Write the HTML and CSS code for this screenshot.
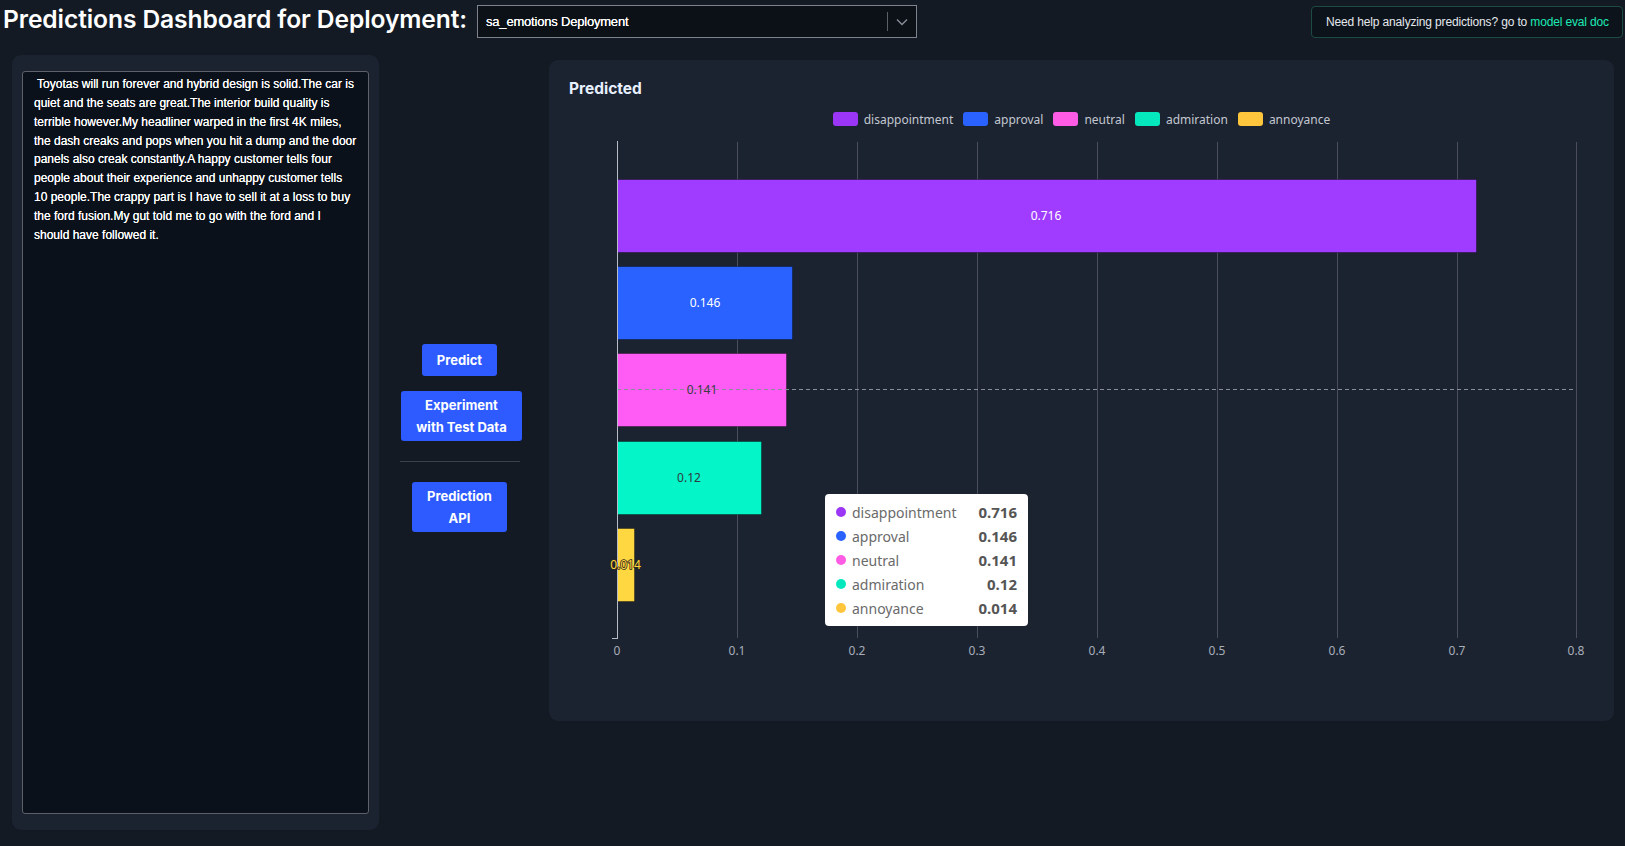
FILE: index.html
```html
<!DOCTYPE html>
<html>
<head>
<meta charset="utf-8">
<link rel="stylesheet" href="styles.css">
</head>
<body>
<header class="topbar">
  <h1 class="title">Predictions Dashboard for Deployment:</h1>
  <div class="select">
    <span class="select-value">sa_emotions Deployment</span>
    <span class="select-sep"></span>
    <svg class="select-chev" width="12" height="8" viewBox="0 0 12 8"><path d="M1 1.5 L6 6.5 L11 1.5" fill="none" stroke="#8a8f99" stroke-width="1.3"/></svg>
  </div>
  <div class="spacer"></div>
  <div class="help">Need help analyzing predictions? go to <span class="help-link">model eval doc</span></div>
</header>
<main class="main">
  <section class="input-panel">
    <div class="input-text"> Toyotas will run forever and hybrid design is solid.The car is<br>quiet and the seats are great.The interior build quality is<br>terrible however.My headliner warped in the first 4K miles,<br>the dash creaks and pops when you hit a dump and the door<br>panels also creak constantly.A happy customer tells four<br>people about their experience and unhappy customer tells<br>10 people.The crappy part is I have to sell it at a loss to buy<br>the ford fusion.My gut told me to go with the ford and I<br>should have followed it.</div>
  </section>
  <section class="actions">
    <button class="btn btn-predict">Predict</button>
    <button class="btn btn-exp">Experiment<br>with Test Data</button>
    <div class="sep"></div>
    <button class="btn btn-api">Prediction<br>API</button>
  </section>
  <section class="chart-panel">
    <div class="chart-title">Predicted</div>
    <div class="legend">
      <div class="legend-item"><span class="sw sw-dis"></span>disappointment</div>
      <div class="legend-item"><span class="sw sw-app"></span>approval</div>
      <div class="legend-item"><span class="sw sw-neu"></span>neutral</div>
      <div class="legend-item"><span class="sw sw-adm"></span>admiration</div>
      <div class="legend-item"><span class="sw sw-ann"></span>annoyance</div>
    </div>
    <svg class="plot" width="1065" height="594" viewBox="0 0 1065 594">
      <g stroke="#4a4d5c" stroke-width="1">
        <line x1="188.5" y1="15" x2="188.5" y2="511"/>
        <line x1="308.5" y1="15" x2="308.5" y2="511"/>
        <line x1="428.5" y1="15" x2="428.5" y2="511"/>
        <line x1="548.5" y1="15" x2="548.5" y2="511"/>
        <line x1="668.5" y1="15" x2="668.5" y2="511"/>
        <line x1="788.5" y1="15" x2="788.5" y2="511"/>
        <line x1="908.5" y1="15" x2="908.5" y2="511"/>
        <line x1="1027.5" y1="15" x2="1027.5" y2="511"/>
      </g>
      <g stroke="rgba(0,0,0,0.35)" stroke-width="1">
        <rect x="68.5" y="52.5" width="859" height="73" fill="#a03cff"/>
        <rect x="68.5" y="139.5" width="175" height="73" fill="#2962ff"/>
        <rect x="68.5" y="226.5" width="169" height="73" fill="#ff5cf5"/>
        <rect x="68.5" y="314.5" width="144" height="73" fill="#04f5c8"/>
        <rect x="68.5" y="401.5" width="17" height="73" fill="#ffd740"/>
      </g>
      <line x1="68" y1="262.5" x2="1027" y2="262.5" stroke="#8a8d96" stroke-width="1" stroke-dasharray="4 3"/>
      <line x1="68.5" y1="14" x2="68.5" y2="511.5" stroke="#b8bcc6" stroke-width="1"/>
      <line x1="63" y1="511.5" x2="69" y2="511.5" stroke="#b8bcc6" stroke-width="1"/>
      <g class="bar-label" text-anchor="middle">
        <text x="497" y="93" fill="#ffffff">0.716</text>
        <text x="156" y="180" fill="#ffffff">0.146</text>
        <text x="153" y="267" fill="#3a3a44">0.141</text>
        <text x="140" y="355" fill="#2f3a3c">0.12</text>
        <text x="76.5" y="442" fill="#ffd740" stroke="#2e2a1c" stroke-width="1.6" paint-order="stroke">0.014</text>
      </g>
      <g class="tick" text-anchor="middle" fill="#a8adb8">
        <text x="68" y="528">0</text>
        <text x="188" y="528">0.1</text>
        <text x="308" y="528">0.2</text>
        <text x="428" y="528">0.3</text>
        <text x="548" y="528">0.4</text>
        <text x="668" y="528">0.5</text>
        <text x="788" y="528">0.6</text>
        <text x="908" y="528">0.7</text>
        <text x="1027" y="528">0.8</text>
      </g>
    </svg>
    <div class="tooltip">
      <div class="tt-row"><span class="dot dot-dis"></span><span class="tt-name">disappointment</span><span class="tt-val">0.716</span></div>
      <div class="tt-row"><span class="dot dot-app"></span><span class="tt-name">approval</span><span class="tt-val">0.146</span></div>
      <div class="tt-row"><span class="dot dot-neu"></span><span class="tt-name">neutral</span><span class="tt-val">0.141</span></div>
      <div class="tt-row"><span class="dot dot-adm"></span><span class="tt-name">admiration</span><span class="tt-val">0.12</span></div>
      <div class="tt-row"><span class="dot dot-ann"></span><span class="tt-name">annoyance</span><span class="tt-val">0.014</span></div>
    </div>
  </section>
</main>
</body>
</html>
```
FILE: styles.css
```css
* { box-sizing: border-box; }
html, body { margin: 0; padding: 0; }
body {
  background: #141a23;
  width: 1625px;
  height: 846px;
  overflow: hidden;
  font-family: "Liberation Sans", Arial, sans-serif;
  color: #fff;
}
.topbar {
  display: flex;
  align-items: center;
  height: 43px;
  padding: 0 2px 0 3px;
}
.title {
  margin: 0 10px 0 0;
  font-family: Inter, sans-serif;
  font-weight: 600;
  font-size: 24.6px;
  letter-spacing: -0.1px;
  color: #ffffff;
  position: relative;
  top: -3px;
  white-space: nowrap;
}
.select {
  width: 440px;
  height: 33px;
  border: 1px solid #7d828c;
  background: #0c1118;
  display: flex;
  align-items: center;
  padding-left: 8px;
}
.select-value {
  flex: 1;
  font-size: 13px;
  color: #ffffff;
  letter-spacing: -0.2px;
  text-shadow: 0 0 0.4px #fff;
}
.select-sep {
  width: 1px;
  height: 19px;
  background: #5a5f68;
}
.select-chev { margin: 0 8px 0 8px; }
.spacer { flex: 1; }
.help {
  width: 312px;
  height: 32px;
  border: 1px solid #1d4b43;
  border-radius: 4px;
  background: #0d131a;
  display: flex;
  align-items: center;
  padding-left: 14px;
  font-size: 12px;
  color: #e4e8ee;
  white-space: pre;
  letter-spacing: -0.15px;
}
.help-link { color: #1de9b6; }
.main {
  display: flex;
  align-items: flex-start;
  margin-top: 12px;
}
.input-panel {
  margin-left: 12px;
  width: 367px;
  height: 775px;
  background: #1b2330;
  border-radius: 9px;
  padding: 16px 10px;
}
.input-text {
  width: 347px;
  height: 743px;
  border: 1px solid #5e6168;
  border-radius: 3px;
  background: #0b111a;
  padding: 3px 8px 0 11px;
  font-size: 12px;
  line-height: 18.85px;
  color: #ffffff;
  white-space: pre;
  font-weight: normal;
  text-shadow: 0 0 0.4px #fff;
}
.actions {
  width: 170px;
  height: 775px;
  display: flex;
  flex-direction: column;
  align-items: center;
  justify-content: center;
  padding-right: 9px;
  padding-bottom: 9px;
}
.btn {
  border: 0;
  border-radius: 3px;
  background: #2d5bff;
  color: #fff;
  font-family: Inter, sans-serif;
  font-weight: 700;
  font-size: 13px;
  line-height: 22px;
  cursor: pointer;
}
.btn-predict { height: 32px; padding: 0 15px; }
.btn-exp { margin-top: 15px; height: 50px; padding: 0 15px; position: relative; left: 2px; }
.btn-api { height: 50px; padding: 0 15px; }
.sep {
  width: 120px;
  height: 1px;
  background: #3a404c;
  margin: 20px 0 20px;
}
.chart-panel {
  position: relative;
  margin-top: 5px;
  width: 1065px;
  height: 661px;
  background: #1b2330;
  border-radius: 9px;
  padding-top: 19px;
}
.chart-title {
  padding-left: 20px;
  font-family: Inter, sans-serif;
  font-weight: 700;
  font-size: 15.5px;
  line-height: 20px;
  color: #e8f0ff;
}
.legend {
  margin-top: 12px;
  height: 16px;
  display: flex;
  justify-content: center;
  align-items: center;
  gap: 10px;
  font-family: "Noto Sans", sans-serif;
  font-size: 12px;
  color: #c3c7d0;
}
.legend-item { display: flex; align-items: center; }
.sw {
  display: inline-block;
  width: 25px;
  height: 14px;
  border-radius: 3px;
  margin-right: 6px;
}
.sw-dis, .dot-dis { background: #9b36f7; }
.sw-app, .dot-app { background: #2962ff; }
.sw-neu, .dot-neu { background: #ff5ce6; }
.sw-adm, .dot-adm { background: #05e8bd; }
.sw-ann, .dot-ann { background: #ffc53d; }
.plot { display: block; }
.bar-label, .tick {
  font-family: "Noto Sans", sans-serif;
  font-size: 12px;
}
.tooltip {
  position: absolute;
  left: 276px;
  top: 434px;
  width: 203px;
  height: 132px;
  background: #ffffff;
  border-radius: 4px;
  padding: 6px 11px;
  font-family: "Noto Sans", sans-serif;
  font-size: 14px;
}
.tt-row {
  display: flex;
  align-items: center;
  height: 24px;
}
.dot {
  width: 10px;
  height: 10px;
  border-radius: 50%;
  margin-right: 6px;
}
.tt-name { flex: 1; color: #6a6a6a; }
.tt-val { color: #555; font-weight: 700; font-size: 15px; }
```
